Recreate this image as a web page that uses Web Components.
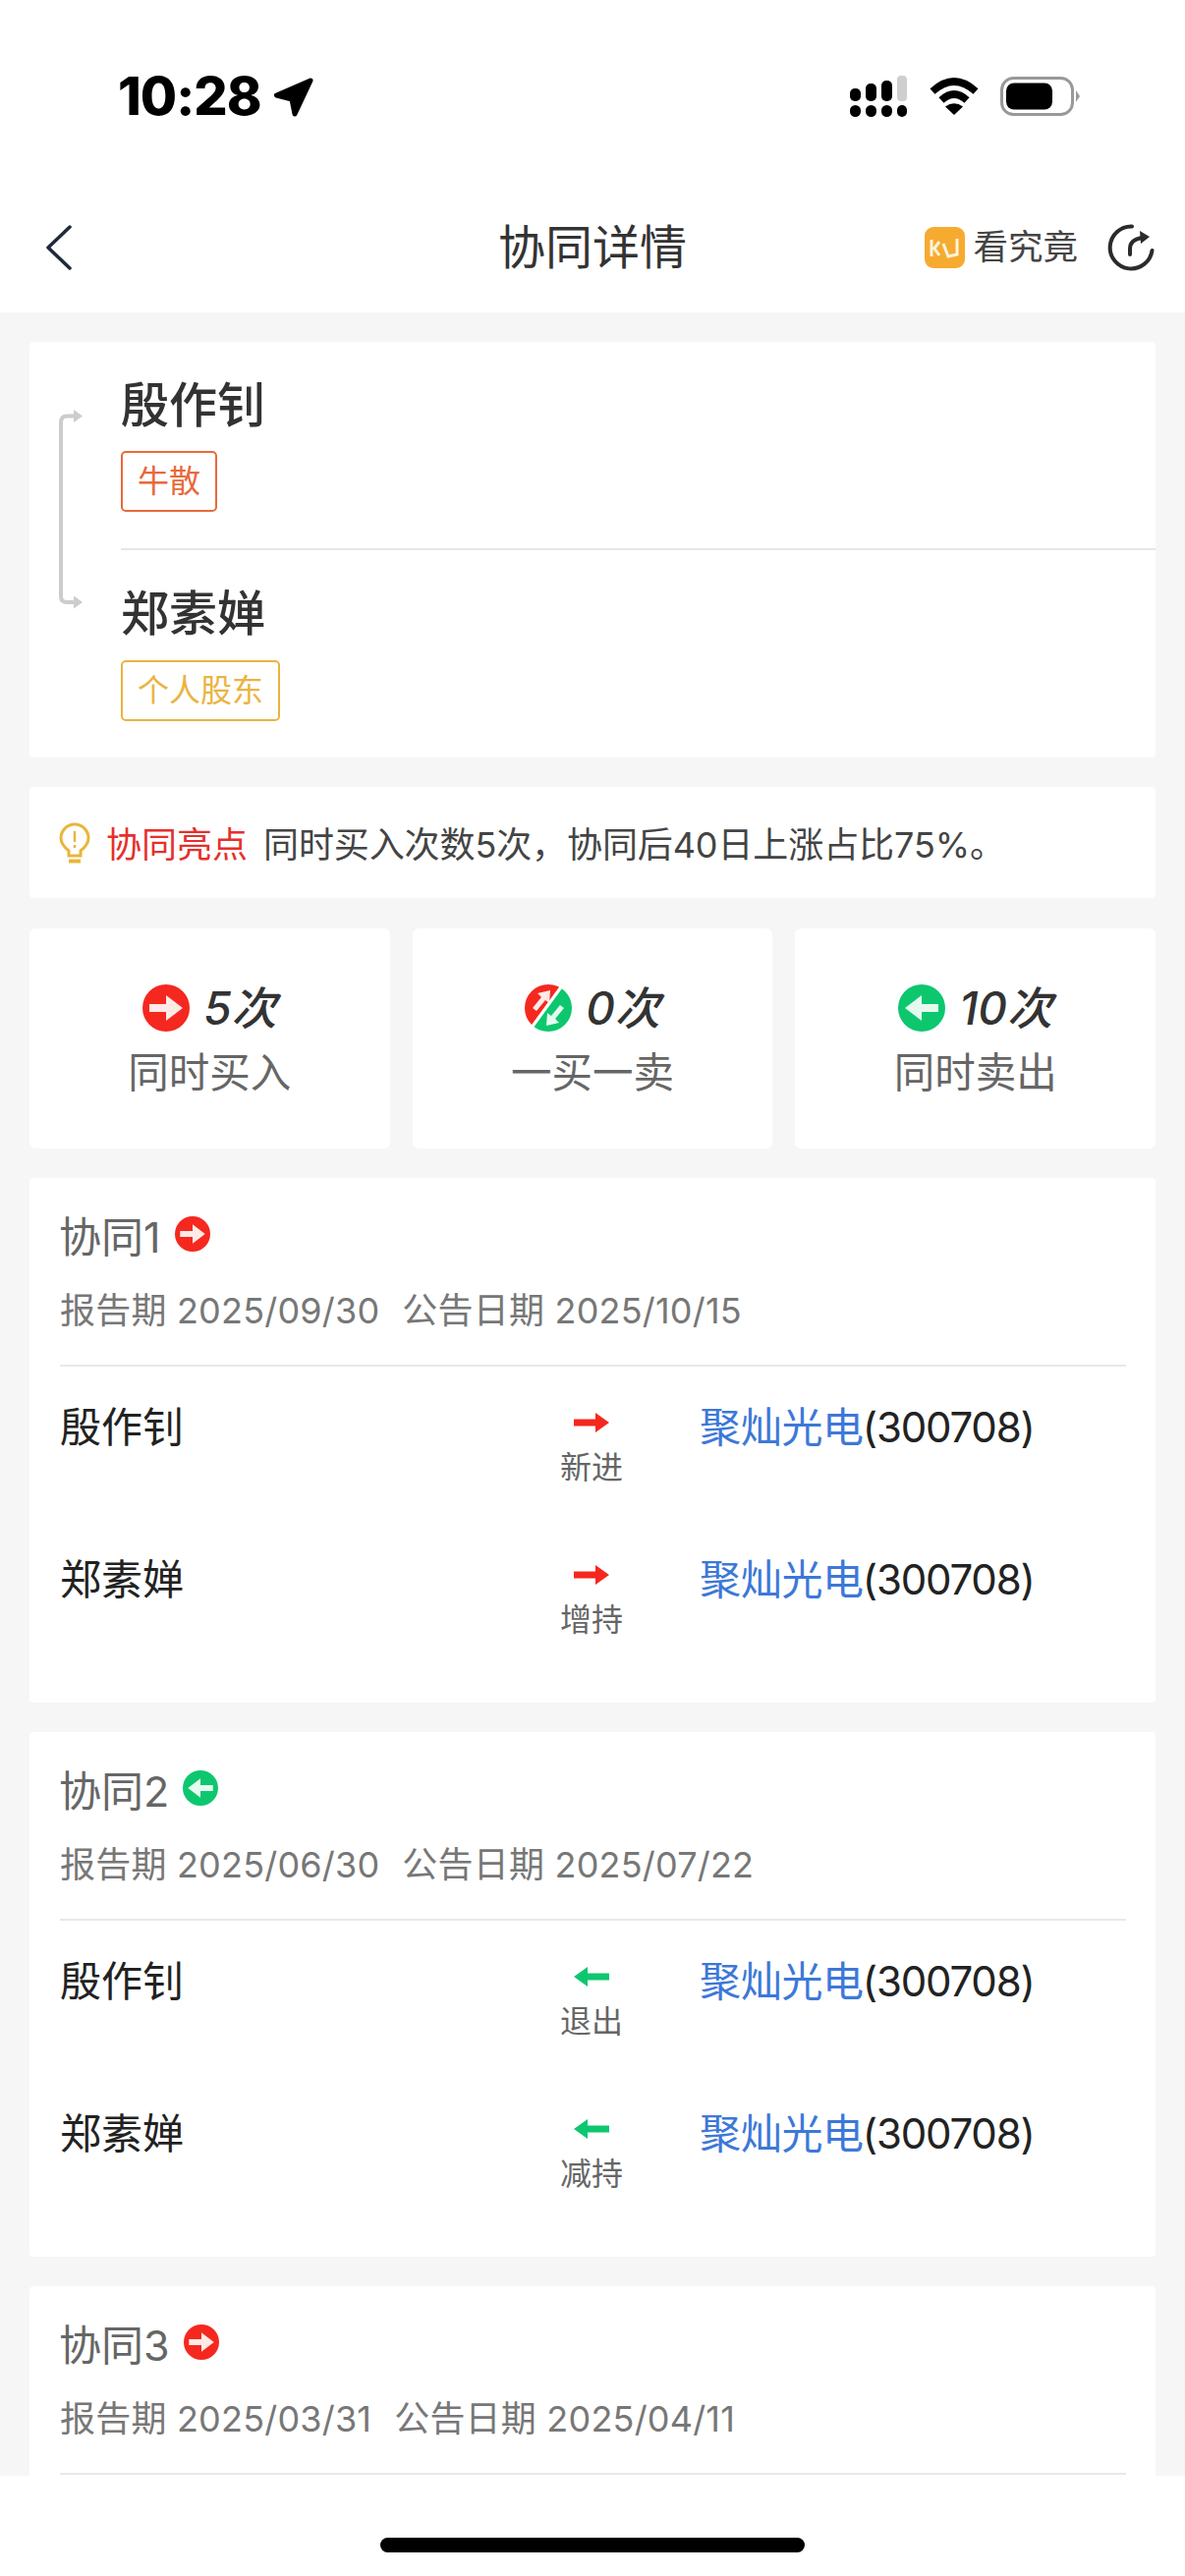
<!DOCTYPE html>
<html lang="zh">
<head>
<meta charset="utf-8">
<title>协同详情</title>
<style>
html, body { margin: 0; padding: 0; background: #fff; }
body { font-family: Inter, "Noto Sans CJK SC", sans-serif; color: #333; }
</style>
</head>
<body>
<app-screen>
  <status-bar></status-bar>
  <nav-bar>协同详情</nav-bar>
  <scroll-area>
    <pair-card>
      <party-entry name="殷作钊" tag="牛散" tone="#e8693a"></party-entry>
      <party-entry divided name="郑素婵" tag="个人股东" tone="#eab440"></party-entry>
    </pair-card>
    <tip-card label="协同亮点">同时买入次数5次，协同后40日上涨占比75%。</tip-card>
    <stat-row>
      <stat-card kind="buy" count="5次">同时买入</stat-card>
      <stat-card kind="mix" count="0次">一买一卖</stat-card>
      <stat-card kind="sell" count="10次">同时卖出</stat-card>
    </stat-row>
    <deal-card heading="协同1" kind="buy" report="2025/09/30" notice="2025/10/15">
      <deal-row name="殷作钊" kind="buy" action="新进" stock="聚灿光电" code="300708"></deal-row>
      <deal-row name="郑素婵" kind="buy" action="增持" stock="聚灿光电" code="300708"></deal-row>
    </deal-card>
    <deal-card heading="协同2" kind="sell" report="2025/06/30" notice="2025/07/22">
      <deal-row name="殷作钊" kind="sell" action="退出" stock="聚灿光电" code="300708"></deal-row>
      <deal-row name="郑素婵" kind="sell" action="减持" stock="聚灿光电" code="300708"></deal-row>
    </deal-card>
    <deal-card heading="协同3" kind="buy" report="2025/03/31" notice="2025/04/11"></deal-card>
  </scroll-area>
  <home-bar></home-bar>
</app-screen>

<script>
class AppScreen extends HTMLElement {
    constructor() {
        super();
        this.attachShadow({mode: "open"});
        this.shadowRoot.innerHTML = `
        <style>
        :host { display: flex; flex-direction: column; width: 1206px; height: 2622px; overflow: hidden; background: #fff; }
        </style>
        <slot></slot>`;
    }
}

class StatusBar extends HTMLElement {
    constructor() {
        super();
        this.attachShadow({mode: "open"});
        this.shadowRoot.innerHTML = `
        <style>
        :host { display: flex; align-items: center; height: 95px; padding: 50px 106px 45px 120px; background: #fff; flex: none; }
        .time { font: 800 54px/1 Inter, sans-serif; color: #000; letter-spacing: -1px; }
        .loc { margin-left: 12px; }
        .right { margin-left: auto; display: flex; align-items: center; }
        .wifi { margin-left: 22px; }
        .batt { margin-left: 22px; }
        </style>
        <span class="time">10:28</span>
        <svg class="loc" width="42" height="42" viewBox="0 0 42 42">
          <path d="M38 5 L3.500 20 L19 24 L22 39 Z" fill="#000" stroke="#000" stroke-width="5" stroke-linejoin="round"/>
        </svg>
        <div class="right">
          <svg width="59" height="42" viewBox="0 0 59 42">
            <rect x="0" y="13" width="11" height="13" rx="5" fill="#000"/>
            <rect x="16" y="8" width="11" height="18" rx="5" fill="#000"/>
            <rect x="32" y="5" width="11" height="21" rx="5" fill="#000"/>
            <rect x="48" y="0" width="10" height="26" rx="4" fill="#cfcfcf"/>
            <rect x="0" y="30" width="11" height="12" rx="5.500" fill="#000"/>
            <rect x="16" y="30" width="11" height="12" rx="5.500" fill="#000"/>
            <rect x="32" y="30" width="11" height="12" rx="5.500" fill="#000"/>
            <rect x="48" y="30" width="10" height="12" rx="5" fill="#000"/>
          </svg>
          <svg class="wifi" width="50" height="38" viewBox="0 0 50 38">
            <path d="M3 14 Q25 -6 47 14" fill="none" stroke="#000" stroke-width="7.500"/>
            <path d="M12 23 Q25 11 38 23" fill="none" stroke="#000" stroke-width="7.500"/>
            <path d="M16 29.500 Q25 23 34 29.500 L25 38 Z" fill="#000"/>
          </svg>
          <svg class="batt" width="82" height="40" viewBox="0 0 82 40">
            <rect x="1.500" y="1.500" width="72" height="37" rx="12" fill="none" stroke="#999" stroke-width="3"/>
            <rect x="6" y="6.500" width="47" height="27" rx="8" fill="#000"/>
            <path d="M77 14 L81 20 L77 26 Z" fill="#999"/>
          </svg>
        </div>`;
    }
}

class NavBar extends HTMLElement {
    constructor() {
        super();
        this.attachShadow({mode: "open"});
        this.shadowRoot.innerHTML = `
        <style>
        :host { display: grid; grid-template-columns: 1fr auto 1fr; align-items: center; height: 124px; padding: 0 31px 4px; background: #fff; flex: none; }
        .back { margin-left: 15px; }
        .title { font-size: 48px; line-height: 60px; color: #333; }
        .right { display: flex; align-items: center; justify-content: flex-end; }
        .see { font-size: 35.500px; line-height: 44px; color: #444; margin-left: 8px; }
        .refresh { margin-left: 30px; }
        svg { display: block; }
        </style>
        <svg class="back" width="28" height="46" viewBox="0 0 28 46">
          <path d="M25 2 L3 23 L25 44" fill="none" stroke="#1f2a3a" stroke-width="3.500" stroke-linecap="round" stroke-linejoin="round"/>
        </svg>
        <div class="title"><slot></slot></div>
        <div class="right">
          <svg width="41" height="42" viewBox="0 0 41 42">
            <rect width="41" height="42" rx="9" fill="#f6ab30"/>
            <path d="M7 13 V30 M9 23 L15 15 M10 22 L15 29" fill="none" stroke="#fff3dc" stroke-width="3"/>
            <path d="M19 17 L24 30 L33 28 V12" fill="none" stroke="#fff3dc" stroke-width="3"/>
          </svg>
          <span class="see">看究竟</span>
          <svg class="refresh" width="48" height="48" viewBox="0 0 48 48">
            <path d="M25 2.500 A21.500 21.500 0 1 0 45.500 27" fill="none" stroke="#2b2b2b" stroke-width="4" stroke-linecap="round"/>
            <path d="M23 31 V25 Q23 16 35 14" fill="none" stroke="#2b2b2b" stroke-width="4" stroke-linecap="round"/>
            <path d="M33 7 L43 13 L34 20 Z" fill="#2b2b2b"/>
          </svg>
        </div>`;
    }
}

class ScrollArea extends HTMLElement {
    constructor() {
        super();
        this.attachShadow({mode: "open"});
        this.shadowRoot.innerHTML = `
        <style>
        :host { display: flex; flex-direction: column; gap: 30px; flex: 1; min-height: 0; overflow: hidden; padding: 30px 30px 0; background: #f6f6f6; }
        ::slotted(*) { flex: none; }
        </style>
        <slot></slot>`;
    }
}

class PairCard extends HTMLElement {
    constructor() {
        super();
        this.attachShadow({mode: "open"});
        this.shadowRoot.innerHTML = `
        <style>
        :host { display: flex; background: #fff; border-radius: 4px; padding-bottom: 37px; }
        .link { width: 93px; flex: none; }
        svg { display: block; margin: 69px 0 0 29px; }
        .list { flex: 1; }
        </style>
        <div class="link">
          <svg width="26" height="204" viewBox="0 0 26 204">
            <path d="M16 6.500 H9 Q3 6.500 3 13 V190 Q3 196 9 196 H16" fill="none" stroke="#ccc" stroke-width="4"/>
            <path d="M16 0 L25 6.500 L16 13 Z M16 189.500 L25 196 L16 202.500 Z" fill="#ccc"/>
          </svg>
        </div>
        <div class="list"><slot></slot></div>`;
    }
}

class PartyEntry extends HTMLElement {
    constructor() {
        super();
        this.attachShadow({mode: "open"});
    }

    connectedCallback() {
        var tone = this.getAttribute("tone");
        this.shadowRoot.innerHTML = `
        <style>
        :host { display: block; padding-top: 35px; }
        :host([divided]) { margin-top: 37px; border-top: 2px solid #e6e6e6; }
        .name { font-size: 49px; line-height: 60px; font-weight: 500; color: #333; }
        .tag { display: block; width: fit-content; box-sizing: border-box; height: 62px; margin-top: 17px; padding: 0 15px; border: 2px solid ${tone}; border-radius: 5px; color: ${tone}; font-size: 32px; line-height: 58px; }
        :host(:not([divided])) .tag { margin-top: 16px; }
        </style>
        <div class="name">${this.getAttribute("name")}</div>
        <span class="tag">${this.getAttribute("tag")}</span>`;
    }
}

class TipCard extends HTMLElement {
    constructor() {
        super();
        this.attachShadow({mode: "open"});
    }

    connectedCallback() {
        this.shadowRoot.innerHTML = `
        <style>
        :host { display: flex; align-items: center; height: 113px; padding-left: 30px; background: #fff; border-radius: 4px; font-size: 36px; }
        svg { display: block; flex: none; }
        .label { color: #e5302c; margin: -2px 0 0 16px; }
        .text { color: #444; margin: -2px 0 0 16px; letter-spacing: -0.1px; }
        </style>
        <svg width="32" height="42" viewBox="0 0 32 42">
          <path d="M10 29 C5 25 2 21 2 16 A14 14 0 0 1 30 16 C30 21 27 25 22 29 V34 H10 Z" fill="none" stroke="#e9b63c" stroke-width="3"/>
          <path d="M16 9 V20 M16 23 V26" fill="none" stroke="#e9b63c" stroke-width="2.500"/>
          <path d="M10 39.500 H22" fill="none" stroke="#e9b63c" stroke-width="4"/>
        </svg>
        <span class="label">${this.getAttribute("label")}</span>
        <span class="text"><slot></slot></span>`;
    }
}

class StatRow extends HTMLElement {
    constructor() {
        super();
        this.attachShadow({mode: "open"});
        this.shadowRoot.innerHTML = `
        <style>
        :host { display: grid; grid-template-columns: repeat(3, 1fr); gap: 23px; margin-top: 1px; }
        </style>
        <slot></slot>`;
    }
}

class DirIcon extends HTMLElement {
    constructor() {
        super();
        this.attachShadow({mode: "open"});
    }

    connectedCallback() {
        var kind = this.getAttribute("kind");
        var size = this.getAttribute("size") || 48;
        var body;
        if (kind == "buy") {
            body = `<circle cx="24" cy="24" r="24" fill="#f5281f"/>
            <path d="M7 20 H24 V11 L41 24 L24 37 V28 H7 Z" fill="#ffeae6"/>`;
        } else if (kind == "sell") {
            body = `<circle cx="24" cy="24" r="24" fill="#0dc76f"/>
            <path d="M41 20 H24 V11 L7 24 L24 37 V28 H41 Z" fill="#e6fbef"/>`;
        } else {
            body = `<clipPath id="disc"><circle cx="24" cy="24" r="24"/></clipPath>
            <g clip-path="url(#disc)">
              <path d="M0 0 H37 L2 48 H0 Z" fill="#f5281f"/>
              <path d="M41 0 H48 V48 H6 Z" fill="#0dc76f"/>
            </g>
            <path d="M8 24 L17 13 L13 9 L26 6 L25 19 L21 16 L12 27 Z" fill="#ffeae6"/>
            <path d="M40 24 L31 35 L35 39 L22 42 L23 29 L27 32 L36 21 Z" fill="#e6fbef"/>`;
        }
        this.shadowRoot.innerHTML = `
        <style>
        :host { display: block; flex: none; width: ${size}px; height: ${size}px; }
        svg { display: block; }
        </style>
        <svg width="${size}" height="${size}" viewBox="0 0 48 48">${body}</svg>`;
    }
}

class StatCard extends HTMLElement {
    constructor() {
        super();
        this.attachShadow({mode: "open"});
    }

    connectedCallback() {
        this.shadowRoot.innerHTML = `
        <style>
        :host { display: flex; flex-direction: column; align-items: center; justify-content: center; gap: 13px; height: 224px; background: #fff; border-radius: 6px; }
        .head { display: flex; align-items: center; gap: 14px; height: 56px; }
        .count { font-size: 46px; line-height: 56px; font-style: italic; font-weight: 500; color: #333; }
        .label { font-size: 41.500px; line-height: 50px; color: #666; }
        </style>
        <div class="head">
          <dir-icon kind="${this.getAttribute("kind")}"></dir-icon>
          <span class="count">${this.getAttribute("count")}</span>
        </div>
        <div class="label"><slot></slot></div>`;
    }
}

class DealCard extends HTMLElement {
    constructor() {
        super();
        this.attachShadow({mode: "open"});
    }

    connectedCallback() {
        this.shadowRoot.innerHTML = `
        <style>
        :host { display: block; box-sizing: border-box; height: 534px; padding: 32px 30px 0 31px; background: #fff; border-radius: 4px; }
        .head { display: flex; align-items: center; gap: 14px; height: 56px; font-size: 43px; line-height: 56px; color: #666; }
        .head span { margin-left: -1px; }
        .head dir-icon { margin-top: -7px; }
        .meta { display: flex; gap: 23px; margin-top: 23px; font-size: 36px; line-height: 48px; color: #777; letter-spacing: 0.2px; }
        .rule { height: 2px; margin: 31px 0 34px; background: #e8e8e8; }
        </style>
        <div class="head">
          <span>${this.getAttribute("heading")}</span>
          <dir-icon kind="${this.getAttribute("kind")}" size="36"></dir-icon>
        </div>
        <div class="meta">
          <span>报告期 ${this.getAttribute("report")}</span>
          <span>公告日期 ${this.getAttribute("notice")}</span>
        </div>
        <div class="rule"></div>
        <slot></slot>`;
    }
}

class DealRow extends HTMLElement {
    constructor() {
        super();
        this.attachShadow({mode: "open"});
    }

    connectedCallback() {
        var kind = this.getAttribute("kind");
        var shape = kind == "buy"
            ? `<path d="M0 6.500 H22 V0 L36 10 L22 20 V13.500 H0 Z" fill="#f5281f"/>`
            : `<path d="M36 6.500 H14 V0 L0 10 L14 20 V13.500 H36 Z" fill="#0dc76f"/>`;
        this.shadowRoot.innerHTML = `
        <style>
        :host { display: grid; grid-template-columns: 431px 220px 1fr; height: 155px; font-size: 42px; line-height: 56px; color: #222; }
        .mid { display: flex; flex-direction: column; align-items: center; }
        svg { display: block; margin-top: 13px; }
        .act { margin-top: 16px; font-size: 32px; line-height: 40px; color: #666; }
        .stock { color: #3d78d8; letter-spacing: -0.3px; }
        .code { letter-spacing: -1.200px; margin-left: -1px; }
        </style>
        <div>${this.getAttribute("name")}</div>
        <div class="mid">
          <svg width="36" height="20" viewBox="0 0 36 20">${shape}</svg>
          <span class="act">${this.getAttribute("action")}</span>
        </div>
        <div><span class="stock">${this.getAttribute("stock")}</span><span class="code">(${this.getAttribute("code")})</span></div>`;
    }
}

class HomeBar extends HTMLElement {
    constructor() {
        super();
        this.attachShadow({mode: "open"});
        this.shadowRoot.innerHTML = `
        <style>
        :host { display: flex; justify-content: center; box-sizing: border-box; height: 102px; padding-top: 63px; background: #fff; flex: none; }
        div { width: 432px; height: 15px; border-radius: 8px; background: #000; }
        </style>
        <div></div>`;
    }
}

customElements.define("app-screen", AppScreen);
customElements.define("status-bar", StatusBar);
customElements.define("nav-bar", NavBar);
customElements.define("scroll-area", ScrollArea);
customElements.define("pair-card", PairCard);
customElements.define("party-entry", PartyEntry);
customElements.define("tip-card", TipCard);
customElements.define("stat-row", StatRow);
customElements.define("dir-icon", DirIcon);
customElements.define("stat-card", StatCard);
customElements.define("deal-card", DealCard);
customElements.define("deal-row", DealRow);
customElements.define("home-bar", HomeBar);
</script>
</body>
</html>
